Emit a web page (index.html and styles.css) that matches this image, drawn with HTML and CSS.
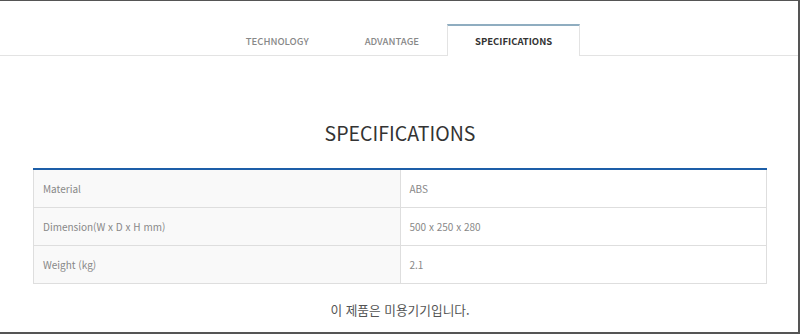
FILE: index.html
```html
<!DOCTYPE html>
<html lang="ko">
<head>
    <meta charset="UTF-8">
    <meta name="viewport" content="width=device-width, initial-scale=1.0">
    <title>Specifications</title>
    <link rel="stylesheet" href="styles.css">
</head>
<body>

<div class="page">
    <ul class="tabs">
        <li class="tab">TECHNOLOGY</li>
        <li class="tab">ADVANTAGE</li>
        <li class="tab active">SPECIFICATIONS</li>
    </ul>

    <div class="spec-section">
        <h2>SPECIFICATIONS</h2>
        <table class="spec-table">
            <tr>
                <th>Material</th>
                <td>ABS</td>
            </tr>
            <tr>
                <th>Dimension(W x D x H mm)</th>
                <td>500 x 250 x 280</td>
            </tr>
            <tr>
                <th>Weight (kg)</th>
                <td>2.1</td>
            </tr>
        </table>
        <p class="notice">이 제품은 미용기기입니다.</p>
    </div>
</div>

</body>
</html>
```

FILE: styles.css
```css
html, body {
    margin: 0;
    padding: 0;
    height: 100%;
}
body {
    font-family: "Noto Sans CJK KR", "Noto Sans", sans-serif;
    background: #fff;
    box-sizing: border-box;
    border-top: 1px solid #555;
    border-right: 2px solid #555;
    border-bottom: 2px solid #555;
    overflow: hidden;
}
.page {
    width: 100%;
}
.tabs {
    list-style: none;
    margin: 0;
    padding: 23px 0 0;
    display: flex;
    justify-content: center;
    border-bottom: 1px solid #e3e3e3;
}
.tab {
    padding: 0 27px;
    height: 30px;
    line-height: 32px;
    font-size: 9.5px;
    font-weight: 500;
    color: #888;
    border: 1px solid transparent;
    border-bottom: none;
    margin-bottom: -1px;
    background: #fff;
}
.tab.active {
    color: #333;
    font-weight: 700;
    border-color: #e3e3e3;
    border-top: 2px solid #8fadc0;
    height: 30px;
    line-height: 30px;
}
.spec-section {
    padding: 0 31px 0 33px;
}
.spec-section h2 {
    margin: 62px 0 20px;
    text-align: center;
    font-size: 19.5px;
    font-weight: 400;
    color: #333;
    line-height: 30px;
}
.spec-table {
    width: 100%;
    border-collapse: collapse;
    border-top: 2px solid #1d5ea8;
    font-size: 10px;
    color: #888;
}
.spec-table th, .spec-table td {
    height: 37px;
    padding: 0 9px;
    text-align: left;
    font-weight: 400;
    border: 1px solid #dedede;
}
.spec-table th {
    width: 50%;
    background: #f9f9f9;
}
.spec-table tr:first-child th, .spec-table tr:first-child td {
    border-top: none;
}
.notice {
    margin: 16px 0 0;
    text-align: center;
    font-size: 12.7px;
    color: #555;
}
```
